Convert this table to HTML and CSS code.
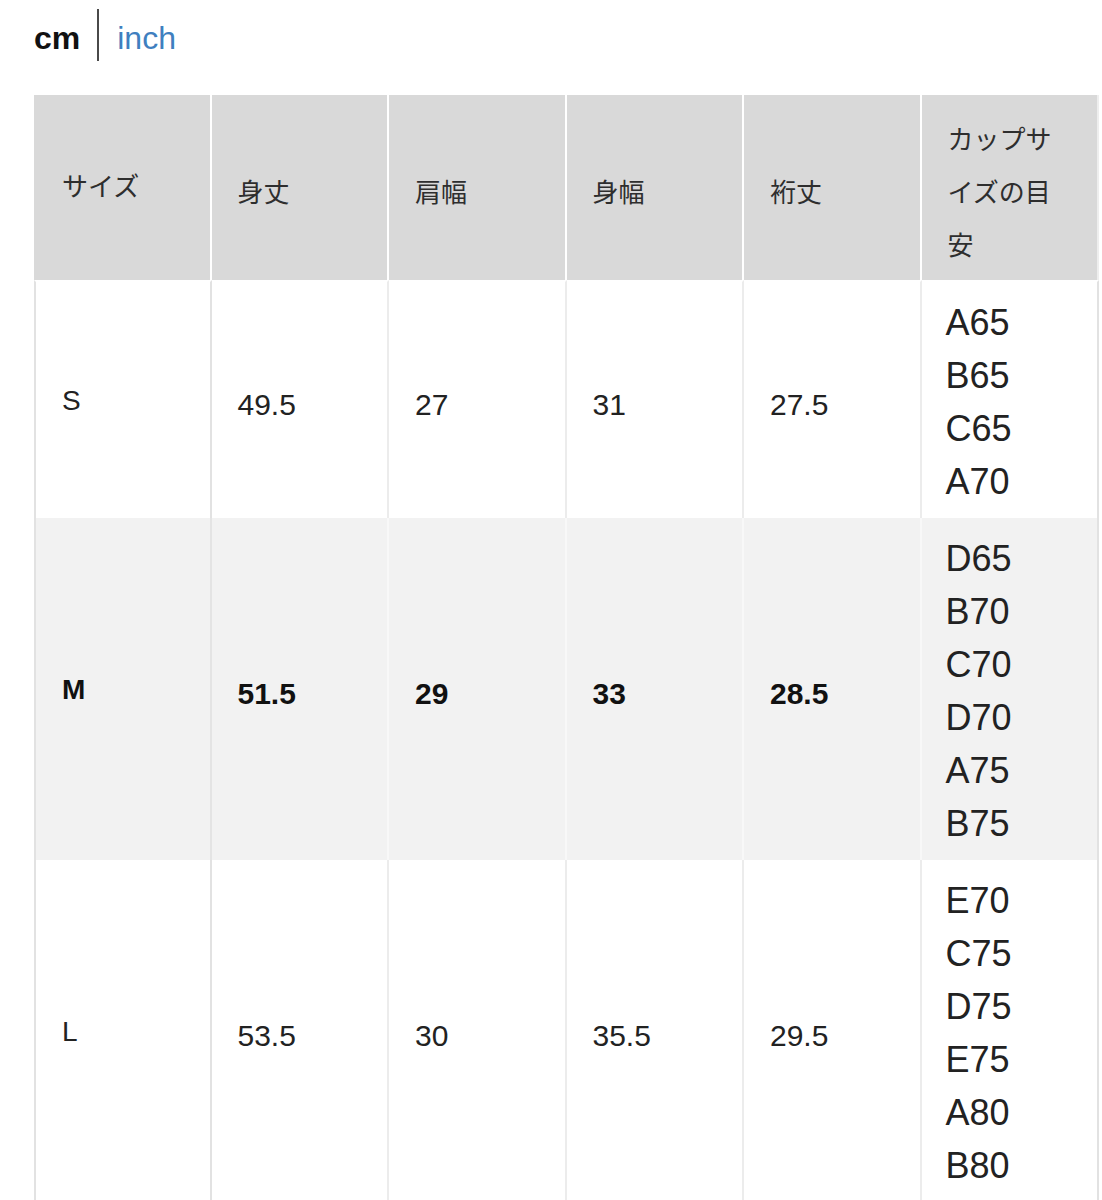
FILE: index.html
```html
<!DOCTYPE html>
<html lang="ja">
<head>
<meta charset="utf-8">
<title>サイズ表</title>
<link rel="stylesheet" href="styles.css">
</head>
<body>
<div class="page">
  <div class="units">
    <span class="unit unit-active">cm</span>
    <span class="unit-sep"></span>
    <span class="unit unit-link">inch</span>
  </div>
  <table class="size-table">
    <colgroup>
      <col><col><col><col><col><col>
    </colgroup>
    <thead>
      <tr>
        <th class="c-size">サイズ</th>
        <th>身丈</th>
        <th>肩幅</th>
        <th>身幅</th>
        <th>裄丈</th>
        <th class="c-cup">カップサイズの目安</th>
      </tr>
    </thead>
    <tbody>
      <tr class="row-first">
        <td class="c-size">S</td>
        <td>49.5</td>
        <td>27</td>
        <td>31</td>
        <td>27.5</td>
        <td class="c-cup">A65<br>B65<br>C65<br>A70</td>
      </tr>
      <tr class="row-active">
        <td class="c-size">M</td>
        <td>51.5</td>
        <td>29</td>
        <td>33</td>
        <td>28.5</td>
        <td class="c-cup">D65<br>B70<br>C70<br>D70<br>A75<br>B75</td>
      </tr>
      <tr>
        <td class="c-size">L</td>
        <td>53.5</td>
        <td>30</td>
        <td>35.5</td>
        <td>29.5</td>
        <td class="c-cup">E70<br>C75<br>D75<br>E75<br>A80<br>B80</td>
      </tr>
    </tbody>
  </table>
</div>
</body>
</html>
```
FILE: styles.css
```css
html, body {
  margin: 0;
  padding: 0;
  background: #ffffff;
}

body {
  font-family: "Liberation Sans", "Noto Sans CJK JP", sans-serif;
  color: #222222;
}

.page {
  padding: 9px 0 0 34px;
}

.units {
  display: flex;
  align-items: flex-start;
  height: 52px;
  margin-bottom: 34px;
}

.unit {
  font-size: 32px;
  line-height: 52px;
  padding-top: 3px;
}

.unit-active {
  font-weight: bold;
  color: #111111;
}

.unit-link {
  color: #3f7fbf;
}

.unit-sep {
  width: 2px;
  height: 52px;
  background: #4a4a4a;
  margin: 0 18px 0 17px;
}

.size-table {
  width: 1065px;
  table-layout: fixed;
  border-collapse: separate;
  border-spacing: 0;
}

.size-table th,
.size-table td {
  text-align: left;
  vertical-align: middle;
  padding: 17px 24px 9px 26px;
  border-right: 2px solid #ececec;
}

.size-table th {
  background: #d9d9d9;
  font-weight: normal;
  font-size: 26px;
  line-height: 53px;
  color: #2e2e2e;
  padding: 19px 22px 7px 26px;
  border-right-color: #ffffff;
}

.size-table th.c-size {
  padding-top: 13px;
  padding-bottom: 13px;
  border-left: 2px solid #d9d9d9;
}

.size-table td {
  font-size: 30px;
  line-height: 53px;
  color: #222222;
}

.row-first td {
  border-top: 2px solid #ffffff;
}

.size-table td.c-size {
  font-size: 28px;
  padding-top: 13px;
  padding-bottom: 13px;
  border-left: 2px solid #e2e2e2;
  border-right-color: #e2e2e2;
}

.size-table td.c-cup {
  font-size: 36px;
  padding: 14px 20px 10px 24px;
  border-right-color: #e2e2e2;
}

.size-table th.c-cup {
  border-right-color: #eeeeee;
}

.row-active td {
  background: #f2f2f2;
  font-weight: bold;
  color: #111111;
  border-right-color: #f8f8f8;
}

.row-active td.c-size {
  border-right-color: #e4e4e4;
}

.row-active td.c-cup {
  font-weight: normal;
  color: #222222;
  border-right-color: #e2e2e2;
}
```
